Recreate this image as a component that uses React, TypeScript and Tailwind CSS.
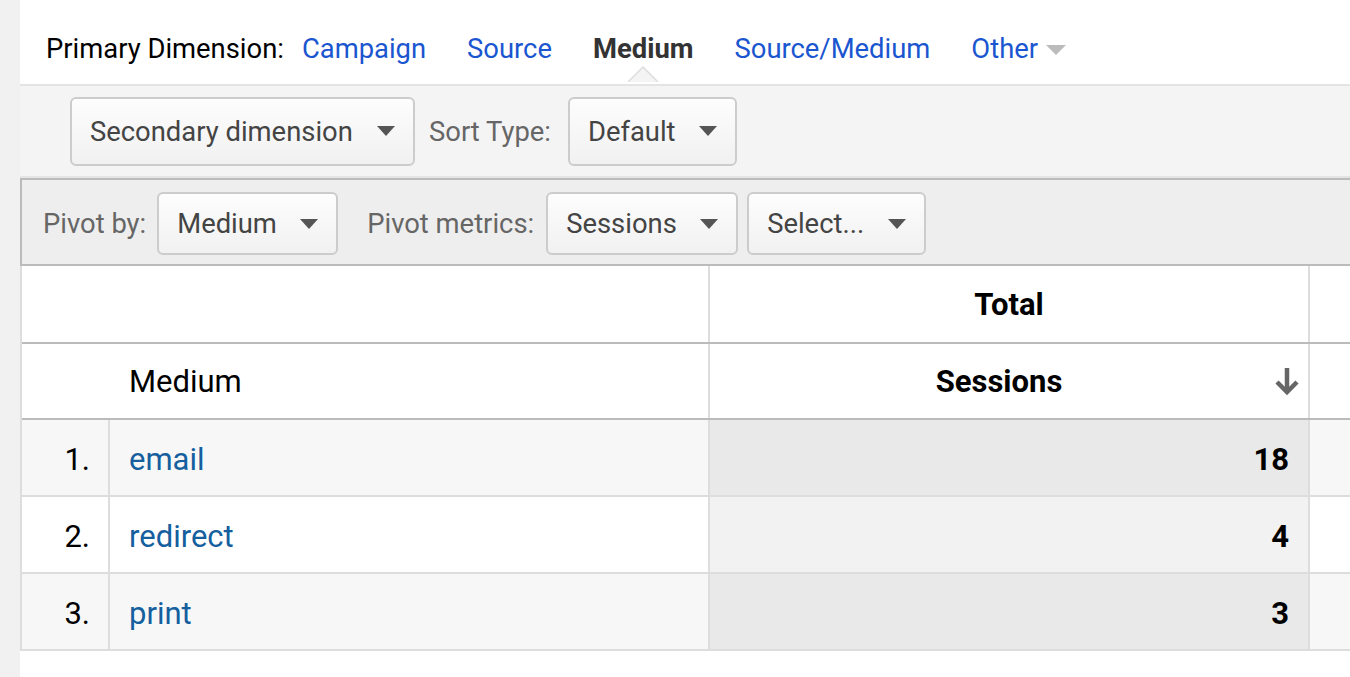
type Row = {
  rank: number;
  medium: string;
  sessions: number;
};

const rows: Row[] = [
  { rank: 1, medium: "email", sessions: 18 },
  { rank: 2, medium: "redirect", sessions: 4 },
  { rank: 3, medium: "print", sessions: 3 },
];

const tabs = ["Campaign", "Source", "Medium", "Source/Medium"];

// little filled triangle used on every dropdown
const Caret = ({ color = "#555" }: { color?: string }) => (
  <svg width="18" height="10" viewBox="0 0 18 10" className="shrink-0">
    <path d="M0 0 L18 0 L9 10 Z" fill={color} />
  </svg>
);

const Dropdown = ({
  label,
  width,
  height,
}: {
  label: string;
  width: string;
  height: string;
}) => (
  <div
    className={`${width} ${height} flex items-center justify-between px-[18px] border-2 border-[#cccccc] rounded-[6px] bg-gradient-to-b from-[#fdfdfd] to-[#f1f1f1] text-[#444444]`}
  >
    <span className="pt-[3px]">{label}</span>
    <Caret />
  </div>
);

const SortArrow = () => (
  <svg width="26" height="30" viewBox="0 0 26 30" className="absolute right-[8px] top-1/2 -translate-y-1/2">
    <path d="M13 2 L13 26" stroke="#666" strokeWidth="4.5" />
    <path d="M3 16 L13 26 L23 16" stroke="#666" strokeWidth="4.5" fill="none" />
  </svg>
);

const App = () => {
  return (
    <div className="flex min-h-[677px] font-['Roboto',sans-serif] text-[27.4px] bg-white">
      {/* left gutter */}
      <div className="w-[20px] shrink-0 bg-[#f1f1f1]" />

      <div className="flex-1 flex flex-col">
        {/* Primary dimension tabs */}
        <div className="relative h-[86px] flex items-center pl-[26px] pt-[16px] border-b-2 border-[#e4e4e4]">
          <span className="text-black mr-[18px]">Primary Dimension:</span>
          {tabs.map((tab) =>
            tab === "Medium" ? (
              <span key={tab} className="relative font-bold text-[#333333] mr-[41px]">
                {tab}
                <svg
                  width="30"
                  height="16"
                  viewBox="0 0 30 16"
                  className="absolute left-1/2 -translate-x-1/2 top-[37px]"
                >
                  <path d="M0 16 L15 1 L30 16" fill="#f4f4f4" stroke="#dddddd" strokeWidth="1.5" />
                </svg>
              </span>
            ) : (
              <span key={tab} className="text-[#1a56d0] mr-[41px]">
                {tab}
              </span>
            )
          )}
          <span className="text-[#1a56d0] flex items-center gap-[8px]">
            Other
            <svg width="20" height="10" viewBox="0 0 20 10">
              <path d="M0 0 L20 0 L10 10 Z" fill="#bbbbbb" />
            </svg>
          </span>
        </div>

        {/* Secondary dimension / sort */}
        <div className="h-[92px] flex items-center pl-[50px] bg-[#f4f4f4] border-b-2 border-[#e4e4e4]">
          <Dropdown label="Secondary dimension" width="w-[345px]" height="h-[69px]" />
          <span className="ml-[14px] mr-[17px] pt-[3px] text-[#666666]">Sort Type:</span>
          <Dropdown label="Default" width="w-[169px]" height="h-[69px]" />
        </div>

        {/* Pivot controls */}
        <div className="h-[88px] flex items-center pl-[21px] pt-[3px] bg-[#eeeeee] border-t-2 border-l-2 border-b-2 border-[#bbbbbb]">
          <span className="text-[#666666] mr-[11px] pt-[3px]">Pivot by:</span>
          <Dropdown label="Medium" width="w-[181px]" height="h-[63px]" />
          <span className="ml-[29px] mr-[12px] pt-[3px] text-[#666666]">Pivot metrics:</span>
          <Dropdown label="Sessions" width="w-[192px]" height="h-[63px]" />
          <div className="w-[9px]" />
          <Dropdown label="Select..." width="w-[179px]" height="h-[63px]" />
        </div>

        {/* Table */}
        <div className="border-l-2 border-[#dddddd] text-[31px]">
          <div className="flex h-[78px] border-b-2 border-[#bbbbbb] bg-white">
            <div className="w-[688px] border-r-2 border-[#dddddd]" />
            <div className="w-[600px] border-r-2 border-[#dddddd] flex items-center justify-center pt-[2px] font-bold text-black">
              Total
            </div>
            <div className="flex-1" />
          </div>

          <div className="flex h-[76px] border-b-2 border-[#bbbbbb] bg-white">
            <div className="w-[688px] border-r-2 border-[#dddddd] flex items-center pl-[107px] pt-[2px] text-black">
              Medium
            </div>
            <div className="relative w-[600px] border-r-2 border-[#dddddd] flex items-center justify-center pr-[20px] pt-[2px] font-bold text-black">
              Sessions
              <SortArrow />
            </div>
            <div className="flex-1" />
          </div>

          {rows.map((row) => {
            const odd = row.rank % 2 === 1;
            return (
              <div
                key={row.rank}
                className={`flex h-[77px] border-b-2 border-[#dddddd] ${odd ? "bg-[#f7f7f7]" : "bg-white"}`}
              >
                <div className="w-[88px] border-r-2 border-[#dddddd] flex items-center justify-end pr-[18px] pt-[5px] text-black">
                  {row.rank}.
                </div>
                <div className="w-[600px] border-r-2 border-[#dddddd] flex items-center pl-[19px] pt-[5px] text-[#155f9f]">
                  {row.medium}
                </div>
                <div
                  className={`w-[600px] border-r-2 border-[#dddddd] flex items-center justify-end pr-[19px] pt-[5px] font-bold text-black ${odd ? "bg-[#e9e9e9]" : "bg-[#f2f2f2]"}`}
                >
                  {row.sessions}
                </div>
                <div className="flex-1" />
              </div>
            );
          })}
        </div>
      </div>
    </div>
  );
};

export default App;
